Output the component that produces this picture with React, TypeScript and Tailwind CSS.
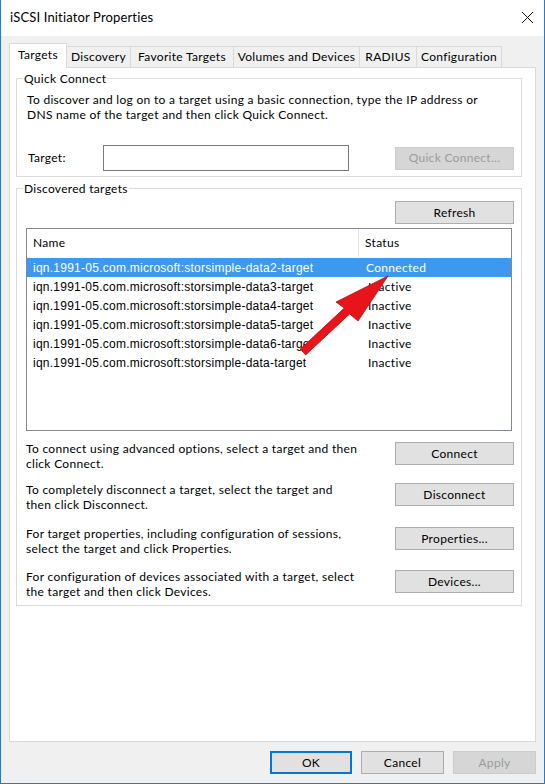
import type { ReactNode } from 'react'

const tabs = [
  { label: 'Targets', w: 'w-[58px]' },
  { label: 'Discovery', w: 'w-[65px]' },
  { label: 'Favorite Targets', w: 'w-[104px]' },
  { label: 'Volumes and Devices', w: 'w-[127px]' },
  { label: 'RADIUS', w: 'w-[58px]' },
  { label: 'Configuration', w: 'w-[86px]' },
]

const targets = [
  { name: 'iqn.1991-05.com.microsoft:storsimple-data2-target', status: 'Connected' },
  { name: 'iqn.1991-05.com.microsoft:storsimple-data3-target', status: 'Inactive' },
  { name: 'iqn.1991-05.com.microsoft:storsimple-data4-target', status: 'Inactive' },
  { name: 'iqn.1991-05.com.microsoft:storsimple-data5-target', status: 'Inactive' },
  { name: 'iqn.1991-05.com.microsoft:storsimple-data6-target', status: 'Inactive' },
  { name: 'iqn.1991-05.com.microsoft:storsimple-data-target', status: 'Inactive' },
]

function Button({
  children,
  disabled,
  focused,
  className = 'w-[119px]',
}: {
  children: ReactNode
  disabled?: boolean
  focused?: boolean
  className?: string
}) {
  const tone = disabled
    ? 'border-[#cccccc] bg-[#d6d6d6] text-[#9b9b9b]'
    : focused
      ? 'border-2 border-[#0078d7] bg-[#e1e1e1] text-black'
      : 'border-[#adadad] bg-[#e1e1e1] text-black'
  return (
    <button
      type="button"
      className={`flex h-[23px] shrink-0 items-center justify-center border text-[12px] leading-none ${tone} ${className}`}
    >
      {children}
    </button>
  )
}

function Action({ text, label, top }: { text: ReactNode; label: string; top: string }) {
  return (
    <div className={`flex items-start justify-between pr-[7px] ${top}`}>
      <p className="whitespace-nowrap text-[12px] leading-[15px]">{text}</p>
      <div className="mt-[1px]">
        <Button>{label}</Button>
      </div>
    </div>
  )
}

export default function App() {
  return (
    <div className="relative flex h-[784px] w-[545px] flex-col overflow-hidden border-x border-b border-[#1c7fd6] bg-[#f0f0f0] font-['Lato',sans-serif] tracking-[0.3px] text-black">
      {/* title bar */}
      <div className="flex h-[36px] shrink-0 items-center justify-between bg-white pl-[9px] pr-[10px]">
        <span className="text-[13px] tracking-[0.15px]">iSCSI Initiator Properties</span>
        <svg width="13" height="13" viewBox="0 0 13 13" className="mt-[-2px]">
          <path d="M1 1 L12 12 M12 1 L1 12" stroke="#111" strokeWidth="1" fill="none" />
        </svg>
      </div>

      <div className="flex flex-1 flex-col px-[8px] pt-[7px]">
        {/* tabs */}
        <div className="relative z-10 flex h-[24px] items-end">
          {tabs.map((t, i) =>
            i === 0 ? (
              <div
                key={t.label}
                className={`-mb-px flex h-[25px] items-center justify-center border border-b-0 border-[#d9d9d9] bg-white pb-[2px] text-[12px] ${t.w}`}
              >
                {t.label}
              </div>
            ) : (
              <div
                key={t.label}
                className={`-ml-px flex h-[21px] items-center justify-center border border-b-0 border-[#d9d9d9] bg-[#f0f0f0] text-[12px] ${t.w}`}
              >
                {t.label}
              </div>
            ),
          )}
        </div>

        {/* tab page */}
        <div className="h-[675px] w-[527px] border border-[#d9d9d9] bg-white pl-[6px] pt-[3px]">
          <fieldset className="w-[506px] border border-[#dcdcdc] pb-[5px] pl-[10px]">
            <legend className="-ml-[4px] px-[1px] text-[12px] leading-[15px]">Quick Connect</legend>
            <p className="mt-[6px] whitespace-nowrap text-[12px] leading-[15px]">
              To discover and log on to a target using a basic connection, type the IP address or
              <br />
              DNS name of the target and then click Quick Connect.
            </p>
            <div className="mt-[23px] flex items-center pr-[7px]">
              <span className="w-[76px] pl-[1px] text-[12px]">Target:</span>
              <div className="h-[26px] w-[246px] border border-[#7a7a7a] bg-white" />
              <div className="ml-auto">
                <Button disabled>Quick Connect...</Button>
              </div>
            </div>
          </fieldset>

          <fieldset className="mt-[4px] h-[425px] w-[506px] border border-[#dcdcdc] pl-[9px]">
            <legend className="-ml-[3px] px-[1px] text-[12px] leading-[15px]">Discovered targets</legend>
            <div className="mt-[5px] flex justify-end pr-[7px]">
              <Button>Refresh</Button>
            </div>

            {/* list view */}
            <div className="mt-[4px] h-[203px] w-[486px] border border-[#828790] bg-white">
              <div className="flex h-[28px] text-[12px]">
                <div className="flex w-[332px] items-center border-r border-[#e5e5e5] pl-[6px]">Name</div>
                <div className="flex items-center pl-[6px]">Status</div>
              </div>
              <div className="mt-[1px] font-['Liberation_Sans',sans-serif] text-[12px] tracking-[0.25px]">
                {targets.map((t, i) => (
                  <div
                    key={t.name}
                    className={`flex h-[19px] items-center ${i === 0 ? 'bg-[#3d98ee] text-white' : ''}`}
                  >
                    <span className="w-[339px] whitespace-nowrap pl-[6px]">{t.name}</span>
                    <span className={`font-['Lato',sans-serif] tracking-[0.3px] ${i === 0 ? '' : 'pl-[2px]'}`}>
                      {t.status}
                    </span>
                  </div>
                ))}
              </div>
            </div>

            <Action
              top="mt-[10px]"
              label="Connect"
              text={
                <>
                  To connect using advanced options, select a target and then
                  <br />
                  click Connect.
                </>
              }
            />
            <Action
              top="mt-[11px]"
              label="Disconnect"
              text={
                <>
                  To completely disconnect a target, select the target and
                  <br />
                  then click Disconnect.
                </>
              }
            />
            <Action
              top="mt-[14px]"
              label="Properties..."
              text={
                <>
                  For target properties, including configuration of sessions,
                  <br />
                  select the target and click Properties.
                </>
              }
            />
            <Action
              top="mt-[13px]"
              label="Devices..."
              text={
                <>
                  For configuration of devices associated with a target, select
                  <br />
                  the target and then click Devices.
                </>
              }
            />
          </fieldset>
        </div>

        {/* dialog buttons */}
        <div className="mt-[9px] flex justify-end gap-[9px]">
          <Button focused className="w-[82px]">
            OK
          </Button>
          <Button className="w-[83px]">Cancel</Button>
          <Button disabled className="w-[83px]">
            Apply
          </Button>
        </div>
      </div>

      {/* annotation arrow drawn over the list */}
      <svg
        className="pointer-events-none absolute left-0 top-0"
        width="545"
        height="784"
        viewBox="0 0 545 784"
      >
        <polygon
          points="387,276 335,302 343.3,308.1 299.3,349.1 304.7,354.9 348.7,313.9 357,321"
          fill="#e8141c"
          stroke="#b80c12"
          strokeWidth="0.8"
          strokeLinejoin="round"
        />
      </svg>
    </div>
  )
}
